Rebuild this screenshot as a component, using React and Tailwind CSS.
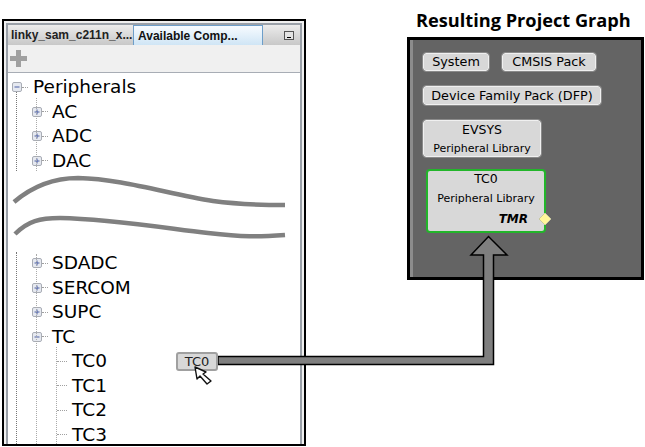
const Box = ({ open }) => (
  <svg width="10" height="10" viewBox="0 0 10 10" className="shrink-0">
    <rect x="0.5" y="0.5" width="9" height="9" rx="1.5" fill="#e6e9f0" stroke="#a9adb5" />
    <path d={open ? "M2.5 5H7.5" : "M2.5 5H7.5M5 2.5V7.5"} stroke="#4a5fa5" strokeWidth="1" />
  </svg>
);

const Row = ({ label, open, level = 1, leaf }) => (
  <div className={`flex items-center h-[24.5px] ${level === 0 ? "pl-[4px]" : level === 1 ? "pl-[24px]" : "pl-[49px]"}`}>
    {leaf ? <span className="w-[10px] mr-[5px] border-t border-dotted border-[#a0a0a0] shrink-0" /> : <Box open={open} />}
    {!leaf && <span className={`${level === 0 ? "w-[6px] mr-[5px]" : "w-[6px] mr-[4px]"} border-t border-dotted border-[#a0a0a0] shrink-0`} />}
    <span className="text-[18.5px] leading-none text-black whitespace-nowrap">{label}</span>
  </div>
);

const Chip = ({ children, className = "" }) => (
  <div className={`border border-[#f0f0f0] outline outline-1 outline-[#8a8a8a] rounded-[3px] bg-[#d8d8d8] text-center text-black ${className}`}>
    {children}
  </div>
);

export default function App() {
  return (
    <div className="relative w-[645px] h-[447px] bg-white overflow-hidden flex font-['DejaVu_Sans',sans-serif]">
      {/* Left panel */}
      <div className="relative mt-[19px] ml-[2px] w-[304px] h-[427px] border-2 border-black bg-[#f0f0f0] p-[2px] pb-0 flex flex-col overflow-hidden shrink-0">
        <div className="border-2 border-b-0 border-[#9aa0a8] flex-1 flex flex-col overflow-hidden">
          <div className="flex h-[20px] shrink-0 bg-gradient-to-b from-[#ececec] to-[#c8c8c8] font-['Liberation_Sans',sans-serif] font-bold text-[12px] text-[#222]">
            <div className="w-[125px] flex items-center pl-[3px] whitespace-nowrap overflow-hidden">linky_sam_c211n_x...</div>
            <div className="w-[130px] flex items-center pl-[4px] border-x border-t border-[#6d9ec9] bg-gradient-to-b from-[#f7fbff] to-[#cfe5f5] whitespace-nowrap text-[#111]">Available Comp...</div>
            <div className="flex-1 flex items-center justify-end pr-[6px]">
              <div className="w-[10px] h-[9px] border border-[#555] bg-[#e4e4e4] flex items-end justify-center pb-[1px]">
                <div className="w-[4px] h-[1px] bg-black" />
              </div>
            </div>
          </div>
          <div className="h-[28px] shrink-0 bg-[#f0f0f0] border-b border-[#a8adb5] flex items-center pl-[2px]">
            <svg width="17" height="17" viewBox="0 0 17 17">
              <path d="M6 0H11V6H17V11H11V17H6V11H0V6H6Z" fill="#a0a0a0" />
            </svg>
          </div>
          <div className="relative flex-1 bg-white pt-[2px] overflow-hidden">
            <span className="absolute left-[8px] top-[19px] h-[79px] border-l border-dotted border-[#777]" />
            <span className="absolute left-[28px] top-[25px] h-[73px] border-l border-dotted border-[#aaa]" />
            <span className="absolute left-[8px] top-[179px] bottom-0 border-l border-dotted border-[#777]" />
            <span className="absolute left-[28px] top-[181px] bottom-0 border-l border-dotted border-[#aaa]" />
            <span className="absolute left-[48px] top-[274px] bottom-0 border-l border-dotted border-[#aaa]" />
            <Row label="Peripherals" open level={0} />
            <Row label="AC" />
            <Row label="ADC" />
            <Row label="DAC" />
            <svg width="285" height="72" viewBox="0 0 285 72" className="block mt-[2px] overflow-visible">
              <path d="M6 27C26 10 46 3 70 3C115 4 160 19 205 26C235 30 255 30 277 30" fill="none" stroke="#808080" strokeWidth="4.5" />
              <path d="M7 59C20 46 32 43 52 43C100 44 150 52 200 58C235 62 250 62 277 60" fill="none" stroke="#808080" strokeWidth="4.5" />
            </svg>
            <div className="h-[4px]" />
            <Row label="SDADC" />
            <Row label="SERCOM" />
            <Row label="SUPC" />
            <Row label="TC" open />
            <Row label="TC0" level={2} leaf />
            <Row label="TC1" level={2} leaf />
            <Row label="TC2" level={2} leaf />
            <Row label="TC3" level={2} leaf />
          </div>
        </div>
      </div>

      {/* Right column */}
      <div className="ml-[101px] w-[238px] flex flex-col shrink-0">
        <div className="mt-[8px] h-[25px] pl-[9px] text-[18.2px] leading-[25px] font-bold text-black font-['Open_Sans',sans-serif] whitespace-nowrap">
          Resulting Project Graph
        </div>
        <div className="mt-[4px] w-[237px] h-[243px] border-[3px] border-black bg-[#646464]">
          <div className="h-full border-l-[3px] border-[#8c8c8c] pl-[10px] pt-[13px] flex flex-col">
            <div className="flex gap-[13px]">
              <Chip className="w-[66px] h-[18px] text-[12.8px] leading-[16px]">System</Chip>
              <Chip className="w-[94px] h-[18px] text-[12.8px] leading-[16px]">CMSIS Pack</Chip>
            </div>
            <Chip className="mt-[15px] w-[178px] h-[19px] text-[12.8px] leading-[17px] whitespace-nowrap">Device Family Pack (DFP)</Chip>
            <Chip className="mt-[15px] w-[118px] h-[37px]">
              <div className="text-[12.5px] leading-[16px] pt-[1px]">EVSYS</div>
              <div className="text-[11px] leading-[14px] mt-[4px] whitespace-nowrap">Peripheral Library</div>
            </Chip>
            <div className="relative mt-[12px] ml-[3px] w-[120px] h-[64px] rounded-[4px] border-2 border-[#22b52a] bg-[#d8d8d8] text-center text-black">
              <div className="text-[12.5px] leading-[16px] pt-[0px]">TC0</div>
              <div className="text-[11px] leading-[14px] mt-[5px] whitespace-nowrap">Peripheral Library</div>
              <div className="text-right pr-[16px] text-[12px] leading-[14px] mt-[6px] font-bold italic text-black">TMR</div>
              <svg width="14" height="14" viewBox="0 0 14 14" className="absolute -right-[8px] bottom-[5px]">
                <path d="M7 1L13 7L7 13L1 7Z" fill="#fff59a" stroke="#c8c8a0" />
              </svg>
            </div>
          </div>
        </div>
      </div>

      {/* Drag arrow and chip overlay */}
      <svg width="645" height="447" viewBox="0 0 645 447" className="absolute inset-0 pointer-events-none">
        <path d="M218 356.5H483.5V255H471L488.5 236.5L507 255H493.5V364.5H218Z" fill="#7f7f7f" stroke="#000" strokeWidth="1.5" strokeLinejoin="miter" />
      </svg>
      <div className="absolute left-[176px] top-[352px] w-[42px] h-[19px] rounded-[3px] border-2 border-[#a0a0a0] bg-[#d8d8d8] text-center text-[13px] leading-[15px] text-[#222]">TC0</div>
      <svg width="22" height="24" viewBox="0 0 22 24" className="absolute left-[193px] top-[362px]">
        <path d="M2 5L13 10L10 12L18 19L14 22L7 14L4 17Z" fill="#fff" stroke="#111" strokeWidth="1.4" strokeLinejoin="round" />
      </svg>
    </div>
  );
}
